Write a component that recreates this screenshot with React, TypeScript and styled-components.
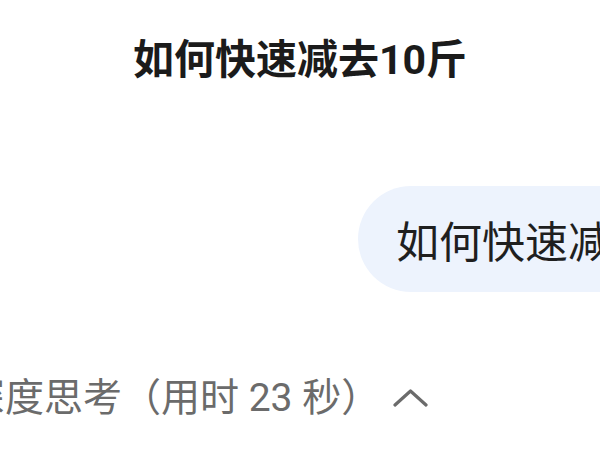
import React from "react";
import styled, { createGlobalStyle } from "styled-components";

const GlobalStyle = createGlobalStyle`
  html, body {
    margin: 0;
    padding: 0;
    background: #ffffff;
  }
  body {
    width: 600px;
    height: 450px;
    overflow: hidden;
    font-family: Roboto, "Noto Sans CJK SC", "Noto Sans", sans-serif;
  }
`;

const Screen = styled.div`
  width: 600px;
  height: 450px;
  overflow: hidden;
  display: flex;
  flex-direction: column;
  background: #ffffff;
`;

const Header = styled.header`
  display: flex;
  justify-content: center;
  padding-top: 36px;
  height: 48px;
`;

const Title = styled.h1`
  margin: 0;
  font-size: 41px;
  line-height: 48px;
  font-weight: 700;
  color: #1b1b1b;
  white-space: nowrap;
`;

const Thread = styled.main`
  display: flex;
  flex-direction: column;
  padding-top: 102px;
`;

const UserRow = styled.div`
  display: flex;
  padding-left: 358px;
`;

const Bubble = styled.div`
  flex: none;
  height: 106px;
  display: flex;
  align-items: center;
  padding: 0 38px 0 38px;
  border-radius: 53px;
  background: #edf3fd;
  color: #1f1f1f;
  font-size: 43px;
  font-weight: 400;
  white-space: nowrap;
`;

const ThinkingRow = styled.button`
  display: flex;
  align-items: center;
  gap: 13px;
  margin: 84px 0 0 -73px;
  padding: 0;
  border: 0;
  background: none;
  color: #6b6b6b;
  font-family: inherit;
  font-size: 39px;
  line-height: 44px;
  white-space: nowrap;
  cursor: pointer;
`;

const Chevron = styled.svg`
  width: 36px;
  height: 36px;
  flex: none;
`;

export default function App() {
  return (
    <>
      <GlobalStyle />
      <Screen>
        <Header>
          <Title>如何快速减去10斤</Title>
        </Header>
        <Thread>
          <UserRow>
            <Bubble>如何快速减去10斤</Bubble>
          </UserRow>
          <ThinkingRow>
            <span>已深度思考（用时 23 秒）</span>
            <Chevron viewBox="0 0 36 36" fill="none">
              <path
                d="M2 25 L17.5 11 L33 25"
                stroke="#6b6b6b"
                strokeWidth="3.2"
                strokeLinecap="round"
                strokeLinejoin="round"
              />
            </Chevron>
          </ThinkingRow>
        </Thread>
      </Screen>
    </>
  );
}
